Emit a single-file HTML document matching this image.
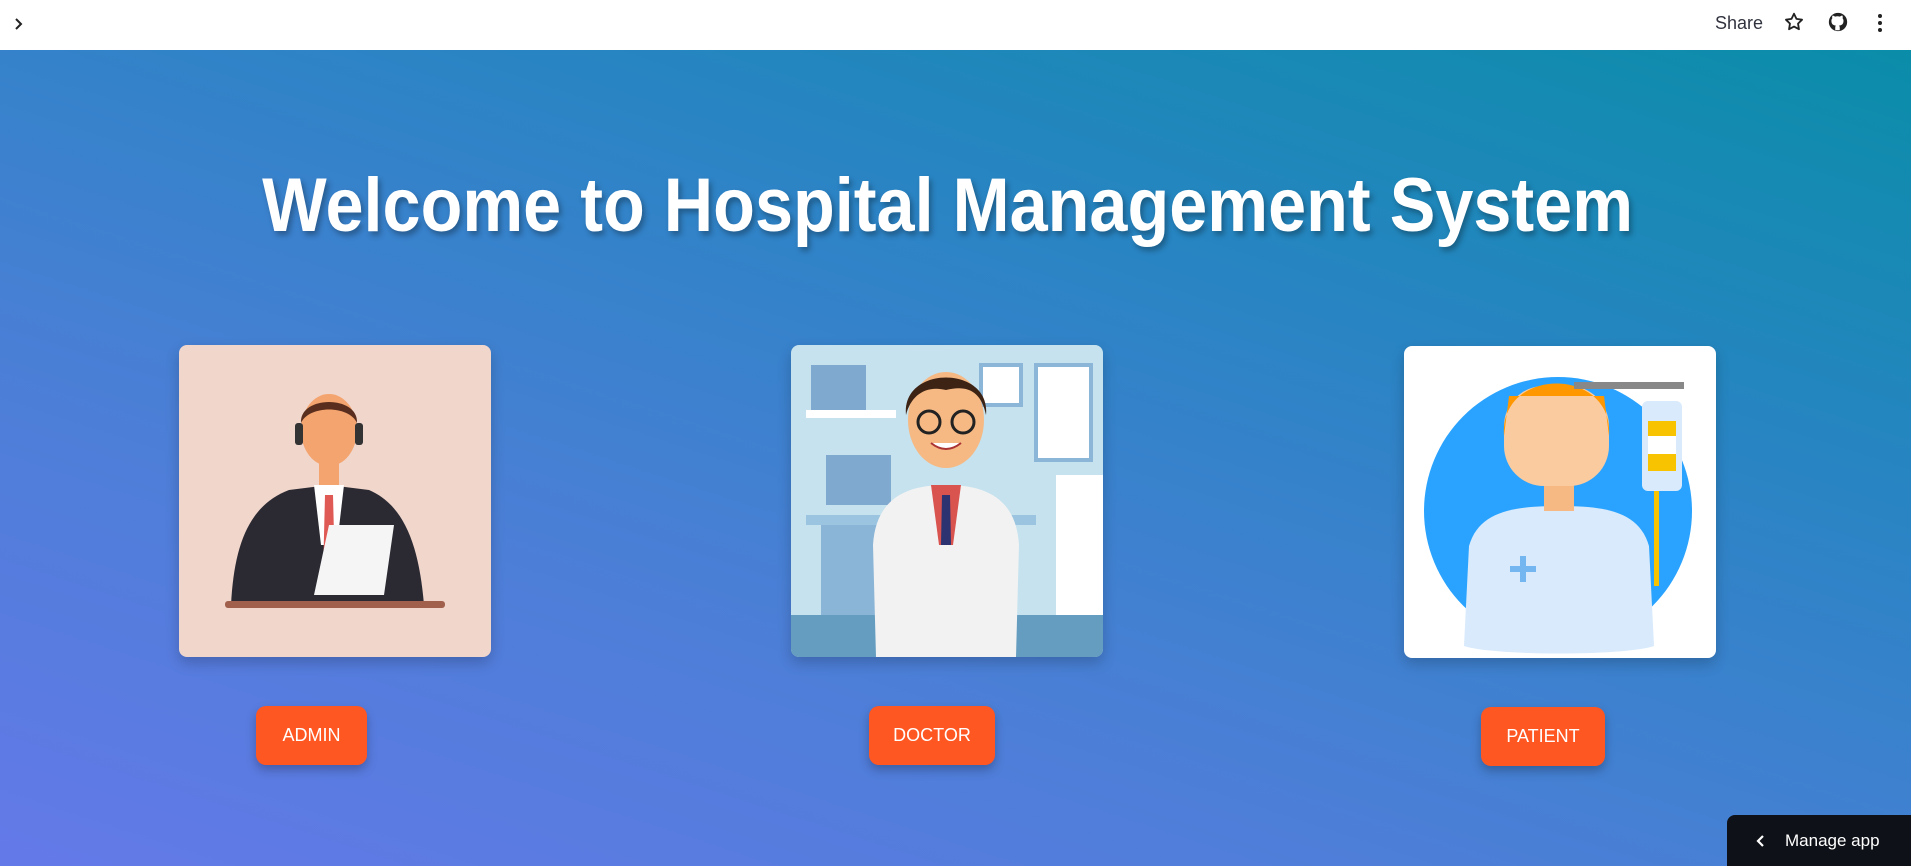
<!DOCTYPE html>
<html><head><meta charset="utf-8"><style>
*{margin:0;padding:0;box-sizing:border-box}
body{width:1911px;height:866px;overflow:hidden;font-family:"Liberation Sans",sans-serif;position:relative;background:linear-gradient(18deg,#6479e8 0%,#4a7fd6 35%,#2a84c4 65%,#078ea6 100%)}
.top{position:absolute;left:0;top:0;width:1911px;height:50px;background:#fff}
.title{position:absolute;top:162px;left:-8px;width:1911px;text-align:center;color:#fff;font-weight:bold;font-size:76px;text-shadow:3px 4px 6px rgba(0,0,0,.3)}
.title span{display:inline-block;transform:scaleX(.9)}
.card{position:absolute;width:312px;height:312px;border-radius:8px;overflow:hidden;box-shadow:0 6px 14px rgba(0,0,0,.2)}
.btn{position:absolute;background:#ff5722;color:#fff;border-radius:10px;font-size:18px;display:flex;align-items:center;justify-content:center;box-shadow:0 5px 10px rgba(0,0,0,.25)}
.manage{position:absolute;left:1727px;top:815px;width:184px;height:51px;background:#0e1117;border-radius:8px 0 0 0;color:#fff;font-size:17px;display:flex;align-items:center}
</style></head><body>
<div class="top">
<svg style="position:absolute;left:12px;top:16px" width="14" height="16" viewBox="0 0 14 16"><path d="M4 3l5 5-5 5" stroke="#222" stroke-width="2" fill="none"/></svg>
<div style="position:absolute;left:1715px;top:13px;font-size:18px;color:#31333f">Share</div>
<svg style="position:absolute;left:1783px;top:11px" width="22" height="22" viewBox="0 0 24 24"><path d="M12 3l2.7 5.6 6.1.9-4.4 4.3 1 6.1L12 17l-5.4 2.9 1-6.1-4.4-4.3 6.1-.9z" stroke="#222" stroke-width="2" fill="none" stroke-linejoin="round"/></svg>
<svg style="position:absolute;left:1827px;top:11px" width="22" height="22" viewBox="0 0 24 24"><circle cx="12" cy="12" r="10" fill="#222"/><path d="M9 21v-3c0-1 .3-1.6.8-2-2.7-.3-5-1.3-5-5.3 0-1.1.4-2 1-2.8-.1-.3-.4-1.3.1-2.8 0 0 .9-.3 2.9 1a10 10 0 0 1 5.2 0c2-1.3 2.900-1 2.9-1 .5 1.500.2 2.500.1 2.800.6.800 1 1.700 1 2.800 0 4-2.300 5-5 5.300.5.400.9 1.100.9 2.100V21z" fill="#fff"/></svg>
<svg style="position:absolute;left:1877px;top:12px" width="6" height="22" viewBox="0 0 6 22"><circle cx="3" cy="4" r="2" fill="#222"/><circle cx="3" cy="11" r="2" fill="#222"/><circle cx="3" cy="18" r="2" fill="#222"/></svg>
</div>
<div class="title"><span>Welcome to Hospital Management System</span></div>

<div class="card" style="left:179px;top:345px;background:#f1d6cc">
<svg width="312" height="312" viewBox="0 0 312 312">
<path d="M52 260 C55 200 70 160 110 145 L150 140 L190 145 C225 160 240 200 245 260Z" fill="#2b2a33"/>
<path d="M135 140 L165 140 L158 200 L142 200Z" fill="#fff"/>
<path d="M146 150 L154 150 L156 230 L144 230Z" fill="#e05a55"/>
<ellipse cx="150" cy="85" rx="28" ry="36" fill="#f4a46e"/>
<rect x="140" y="110" width="20" height="30" fill="#f4a46e"/>
<path d="M122 78 C120 50 180 50 178 78 C170 60 130 60 122 78Z" fill="#5a2e1e"/>
<rect x="116" y="78" width="8" height="22" rx="3" fill="#333"/><rect x="176" y="78" width="8" height="22" rx="3" fill="#333"/>
<path d="M150 180 L215 180 L205 250 L135 250Z" fill="#f5f5f5"/>
<rect x="46" y="256" width="220" height="7" rx="3" fill="#a0604c"/>
</svg></div>

<div class="card" style="left:791px;top:345px;background:#c5e2ee">
<svg width="312" height="312" viewBox="0 0 312 312">
<rect x="0" y="270" width="312" height="42" fill="#659dc0"/>
<rect x="20" y="20" width="55" height="45" fill="#7fa9cf"/><rect x="15" y="65" width="90" height="8" fill="#fff"/>
<rect x="245" y="20" width="55" height="95" fill="#fff" stroke="#8cb6d8" stroke-width="4"/>
<rect x="190" y="20" width="40" height="40" fill="#fff" stroke="#8cb6d8" stroke-width="4"/>
<rect x="35" y="110" width="65" height="50" fill="#7fa9cf"/>
<rect x="15" y="170" width="230" height="10" fill="#9ac4df"/>
<rect x="30" y="180" width="80" height="90" fill="#8ab5d7"/>
<rect x="265" y="130" width="47" height="140" fill="#fff"/>
<path d="M85 312 L82 200 C85 150 120 140 155 140 C190 140 225 150 228 200 L225 312Z" fill="#f2f2f2"/>
<path d="M140 140 L170 140 L162 200 L148 200Z" fill="#d9534f"/>
<path d="M151 150 L159 150 L160 200 L150 200Z" fill="#2c3370"/>
<ellipse cx="155" cy="75" rx="38" ry="48" fill="#f6b983"/>
<path d="M115 70 C110 20 200 20 195 70 C190 45 175 40 155 45 C135 40 120 50 115 70Z" fill="#3d2314"/>
<circle cx="138" cy="77" r="11" fill="none" stroke="#222" stroke-width="3"/><circle cx="172" cy="77" r="11" fill="none" stroke="#222" stroke-width="3"/>
<path d="M140 98 Q155 110 170 98" fill="#fff" stroke="#a33" stroke-width="2"/>
</svg></div>

<div class="card" style="left:1404px;top:346px;background:#fff">
<svg width="312" height="312" viewBox="0 0 312 312">
<circle cx="154" cy="165" r="134" fill="#29a3ff"/>
<path d="M60 300 L65 200 C75 165 110 160 156 160 C200 160 235 165 245 200 L250 300 C220 310 90 310 60 300Z" fill="#d8eafc"/>
<rect x="140" y="135" width="30" height="30" fill="#f6b983"/>
<rect x="100" y="40" width="105" height="100" rx="40" fill="#fbcba0"/>
<path d="M100 90 C95 20 210 20 205 90 L200 50 L105 50Z" fill="#ff9800"/>
<rect x="238" y="55" width="40" height="90" rx="6" fill="#d8eafc"/>
<rect x="244" y="75" width="28" height="50" fill="#f8c300"/><rect x="244" y="90" width="28" height="18" fill="#fff"/>
<rect x="170" y="36" width="110" height="7" fill="#888"/>
<path d="M250 145 L255 145 L255 240 L250 240Z" fill="#f8c300"/>
<rect x="116" y="210" width="6" height="26" fill="#74b7f0"/><rect x="106" y="220" width="26" height="6" fill="#74b7f0"/>
</svg></div>

<div class="btn" style="left:256px;top:706px;width:111px;height:59px">ADMIN</div>
<div class="btn" style="left:869px;top:706px;width:126px;height:59px">DOCTOR</div>
<div class="btn" style="left:1481px;top:707px;width:124px;height:59px">PATIENT</div>

<div class="manage"><svg style="margin-left:28px;margin-right:20px" width="10" height="14" viewBox="0 0 10 14"><path d="M8 2L3 7l5 5" stroke="#fff" stroke-width="2.2" fill="none"/></svg>Manage app</div>
</body></html>
